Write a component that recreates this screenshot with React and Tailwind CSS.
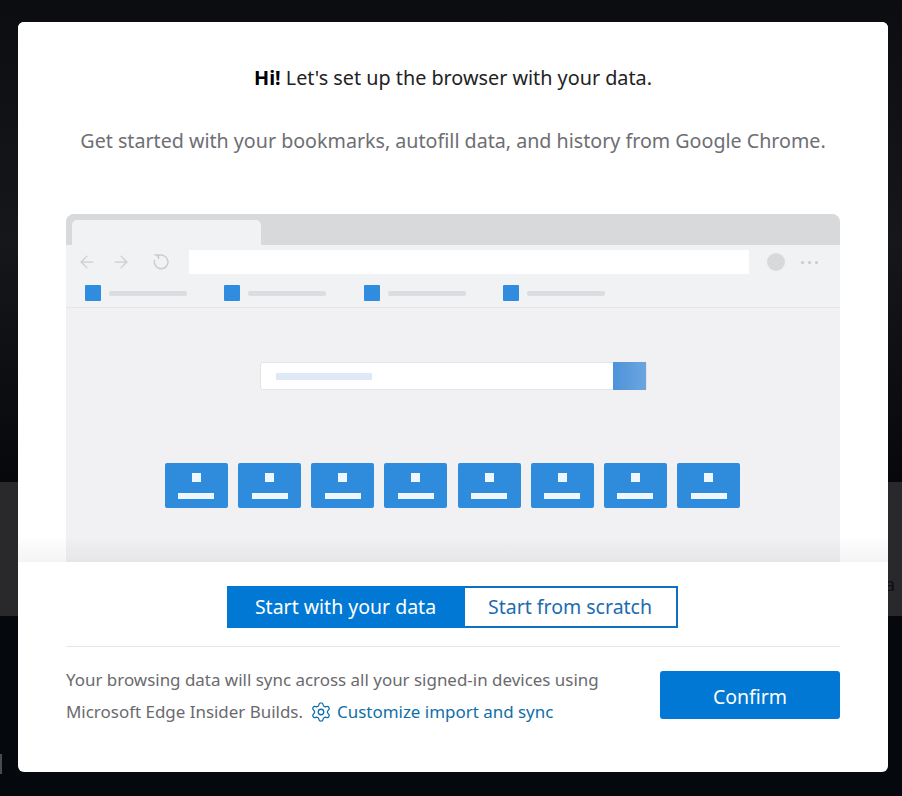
import { ArrowLeft, ArrowRight, Settings } from 'lucide-react'

const bookmarks = [0, 1, 2, 3]
const tiles = [0, 1, 2, 3, 4, 5, 6, 7]

function BrowserPreview() {
  return (
    <div className="flex h-[348px] w-[774px] flex-col overflow-hidden rounded-t-lg bg-[#f1f2f4]">
      {/* tab strip */}
      <div className="flex h-[31px] shrink-0 items-end bg-[#d8d9db] pl-[6px]">
        <div className="h-[25px] w-[189px] rounded-t-[5px] bg-[#f1f2f4]" />
      </div>

      {/* toolbar */}
      <div className="flex h-[33px] shrink-0 items-start pt-[5px]">
        <div className="flex h-6 w-[123px] shrink-0 items-center pl-[11px] text-[#cccdd0]">
          <ArrowLeft size={20} strokeWidth={1.5} />
          <ArrowRight size={20} strokeWidth={1.5} className="ml-[14px]" />
          <svg width="18" height="18" viewBox="0 0 18 18" fill="none" stroke="currentColor" strokeWidth="1.5" className="ml-[21px]">
            <path d="M5 3.5A6.8 6.8 0 1 1 2.6 7" />
            <path d="M2.5 2h4v4" />
          </svg>
        </div>
        <div className="h-6 w-[560px] shrink-0 bg-white" />
        <div className="ml-[18px] h-[18px] w-[18px] shrink-0 translate-y-[3px] rounded-full bg-[#d8d9db]" />
        <div className="ml-4 flex translate-y-[11px] gap-[4px]">
          <span className="h-[3px] w-[3px] rounded-full bg-[#c9cacd]" />
          <span className="h-[3px] w-[3px] rounded-full bg-[#c9cacd]" />
          <span className="h-[3px] w-[3px] rounded-full bg-[#c9cacd]" />
        </div>
      </div>

      {/* bookmarks */}
      <div className="flex h-[30px] shrink-0 gap-[37.4px] border-b border-[#e4e5e7] pl-[19px] pt-[7px]">
        {bookmarks.map((b) => (
          <div key={b} className="flex w-[102px] items-start">
            <div className="h-4 w-[16px] shrink-0 rounded-[1px] bg-[#2f8cdf]" />
            <div className="ml-[8px] mt-[6px] h-[5px] w-[78px] rounded-[2px] bg-[#dcdde0]" />
          </div>
        ))}
      </div>

      {/* new tab page */}
      <div className="flex flex-1 flex-col items-center bg-gradient-to-b from-[#f1f1f3] from-90% to-[#e6e6e8] pt-[54px]">
        <div className="flex h-7 w-[387px] items-center rounded-l-[3px] border border-[#e3e4e7] bg-white pl-[15px]">
          <div className="h-[7px] w-[96px] rounded-[1px] bg-[#dfe8f6]" />
          <div className="-my-px ml-auto h-7 w-[33px] bg-gradient-to-r from-[#4d93d9] to-[#6ba5e0]" />
        </div>
        <div className="ml-[-1px] mt-[73px] flex gap-[10.2px]">
          {tiles.map((t) => (
            <div key={t} className="flex h-[45px] w-[63px] flex-col items-center rounded-[2px] bg-[#2f8cdc] pt-[10px]">
              <div className="h-[9px] w-[9px] bg-[#eef7ff]" />
              <div className="mt-[11px] h-[6px] w-[36px] bg-[#eef7ff]" />
            </div>
          ))}
        </div>
      </div>
    </div>
  )
}

export default function App() {
  return (
    <div className="relative flex h-[796px] w-[902px] flex-col overflow-hidden bg-[#05090e] font-['Noto_Sans','Open_Sans',sans-serif]">
      {/* page behind the dialog */}
      <div className="h-[482px] bg-gradient-to-b from-[#0b0d11] via-[#16171b] to-[#07080c]" />
      <div className="flex h-[134px] items-center justify-end bg-[#29292b] pt-[70px] text-[18px] text-[#0f0f11]">
        <span className="mr-[7px]">a</span>
      </div>
      <div className="flex-1 bg-[#05090e]" />
      <div className="absolute bottom-[22px] left-0 h-[20px] w-[2px] bg-[#4a4b4e]" />

      {/* dialog */}
      <div className="absolute left-[18px] top-[22px] flex h-[750px] w-[870px] flex-col overflow-hidden rounded-[6px] bg-white">
        <div className="flex h-[540px] shrink-0 flex-col items-center bg-gradient-to-b from-white from-95% to-[#f4f4f5]">
          <p className="mt-[43px] text-[19.8px] leading-[26px] text-[#222]">
            <b className="font-bold text-black">Hi!</b> Let's set up the browser with your data.
          </p>
          <p className="mt-[36px] text-[19.66px] leading-[28px] text-[#6e6e73]">
            Get started with your bookmarks, autofill data, and history from Google Chrome.
          </p>
          <div className="mt-[59px]">
            <BrowserPreview />
          </div>
        </div>

        <div className="flex flex-1 flex-col px-12">
          <div className="ml-[-2px] mt-6 flex justify-center text-[19.5px]">
            <button className="h-[42px] w-[238px] bg-[#0078d4] text-white">Start with your data</button>
            <button className="h-[42px] w-[213px] border-2 border-l-0 border-[#0f6fc0] bg-white text-[#1b6cb0]">Start from scratch</button>
          </div>
          <div className="mt-[18px] h-px bg-[#e6e6e8]" />
          <div className="mt-6 flex items-start justify-between">
            <div className="text-[16.95px] leading-[32px] text-[#6a6a6e]">
              <p className="-mt-[7px]">Your browsing data will sync across all your signed-in devices using</p>
              <p className="flex items-center">
                Microsoft Edge Insider Builds.
                <Settings size={22} strokeWidth={1.4} className="ml-[7px] text-[#0f6fa8]" />
                <a className="ml-[5px] text-[#0f6fa8]">Customize import and sync</a>
              </p>
            </div>
            <button className="h-12 w-[180px] rounded-[3px] bg-[#0078d4] pt-[3px] text-[19.5px] text-white">Confirm</button>
          </div>
        </div>
      </div>
    </div>
  )
}
